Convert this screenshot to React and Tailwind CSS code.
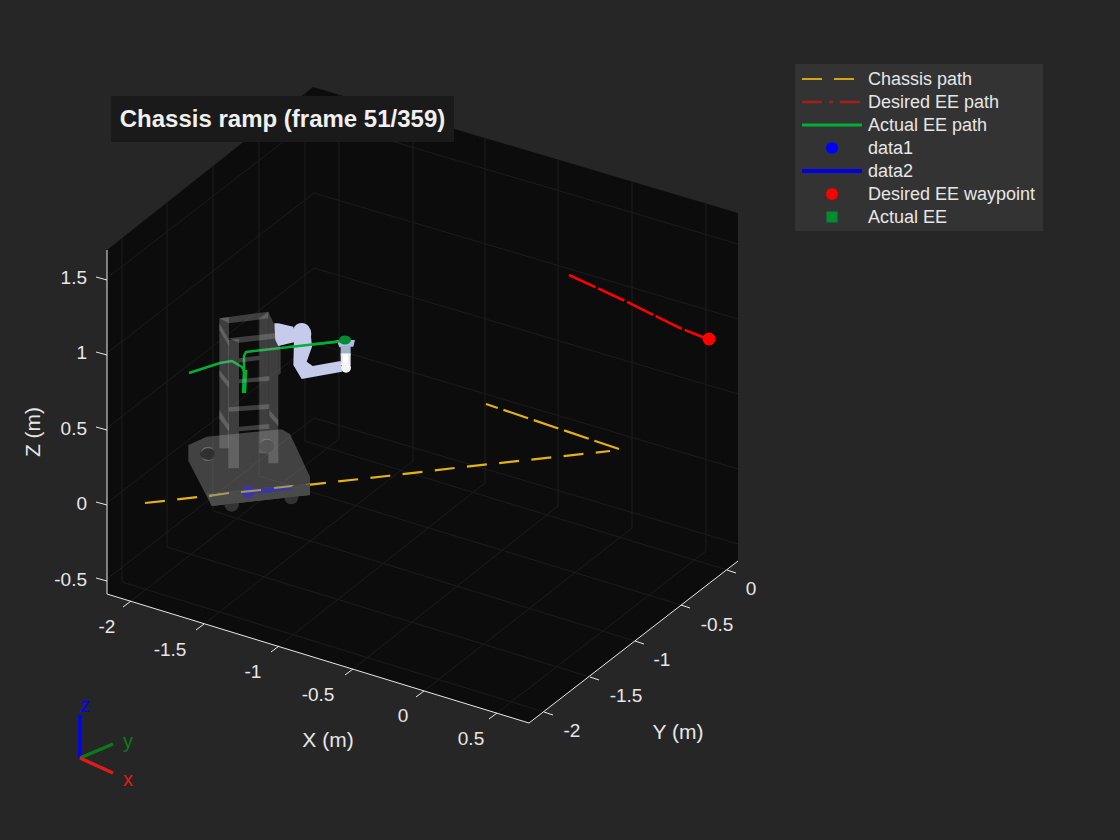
const FONT = { fontFamily: '"Liberation Sans", Arial, sans-serif' };

const zLeft = [278, 353, 428, 503, 579];
const zBack = [118, 193, 268, 343, 418];
const zRight = [244, 319, 394, 469, 544];

const leftWallX = [[122, 238, 582], [167, 202, 547], [213, 166, 511], [259, 130, 476], [305, 93, 441]];
const rightWallX = [[339, 95, 439], [413, 117, 461], [485, 138, 483], [558, 160, 506], [632, 182, 528], [706, 204, 551]];
const xTicks = [[131, 601], [204, 624], [279, 646], [353, 669], [424, 691], [497, 713]];
const yTicks = [[544, 712], [590, 677], [635, 641], [681, 605], [727, 570]];

function Grid() {
  return (
    <g stroke="#1c1c1c" strokeWidth="1" fill="none">
      {zLeft.map((y, i) => (
        <polyline key={y} points={`107,${y} 314,${zBack[i]} 738,${zRight[i]}`} />
      ))}
      {leftWallX.map(([x, a, b]) => (
        <line key={x} x1={x} y1={a} x2={x} y2={b} />
      ))}
      {rightWallX.map(([x, a, b]) => (
        <line key={x} x1={x} y1={a} x2={x} y2={b} />
      ))}
      {xTicks.map(([x, y], i) => (
        <line key={x} x1={x} y1={y} x2={rightWallX[i][0]} y2={rightWallX[i][2]} />
      ))}
      {yTicks.map(([x, y], i) => (
        <line key={x} x1={x} y1={y} x2={leftWallX[i][0]} y2={leftWallX[i][2]} />
      ))}
    </g>
  );
}

function Axes() {
  return (
    <g stroke="#e8e8e8" strokeWidth="1" fill="none">
      <polyline points="107,250 107,594 529,723 738,561" />
      {zLeft.map((y) => (
        <line key={y} x1="107" y1={y + 2} x2="96" y2={y - 1} />
      ))}
      {xTicks.map(([x, y]) => (
        <line key={x} x1={x} y1={y} x2={x - 8} y2={y + 6} />
      ))}
      {yTicks.map(([x, y]) => (
        <line key={x} x1={x} y1={y} x2={x + 9} y2={y + 3} />
      ))}
    </g>
  );
}

function Labels() {
  const items = [
    ['1.5', 87, 284, 'end'], ['1', 87, 359, 'end'], ['0.5', 87, 435, 'end'], ['0', 87, 510, 'end'], ['-0.5', 87, 586, 'end'],
    ['-2', 107, 633, 'middle'], ['-1.5', 170, 656, 'middle'], ['-1', 253, 678, 'middle'], ['-0.5', 318, 701, 'middle'], ['0', 403, 722, 'middle'], ['0.5', 471, 745, 'middle'],
    ['0', 751, 595, 'middle'], ['-0.5', 717, 631, 'middle'], ['-1', 662, 666, 'middle'], ['-1.5', 626, 702, 'middle'], ['-2', 572, 737, 'middle'],
  ];
  return (
    <g fill="#e6e6e6" fontSize="19" style={FONT}>
      {items.map(([t, x, y, a], i) => (
        <text key={i} x={x} y={y} textAnchor={a}>{t}</text>
      ))}
      <text x="328" y="747" fontSize="21" textAnchor="middle">X (m)</text>
      <text x="678" y="739" fontSize="21" textAnchor="middle">Y (m)</text>
      <text x="40" y="432" fontSize="21" textAnchor="middle" transform="rotate(-90 40 432)">Z (m)</text>
    </g>
  );
}

function RobotBase() {
  return (
    <g transform="translate(130,290) scale(0.33333)">
      <polygon points="175,465 230,440 455,418 480,432 540,560 540,615 245,648 175,512" fill="#9a9a9a" fillOpacity="0.38" />
      <polygon points="230,610 540,580 540,615 245,648" fill="#a0a0a0" fillOpacity="0.1" />
      <circle cx="305" cy="643" r="22" fill="#333333" />
      <circle cx="484" cy="622" r="21" fill="#333333" />
      <polygon points="245,615 540,582 540,615 245,648" fill="#4a4a4a" />
      <circle cx="232" cy="490" r="22" fill="#2a2a2a" fillOpacity="0.7" />
      <path d="M212 490 a21 21 0 0 1 40 -8 a24 24 0 0 0 -40 8z" fill="#6a6a6a" />
      <path d="M214 500 a22 22 0 0 0 38 4 a28 28 0 0 1 -38 -4z" fill="#6a6a6a" />
      <circle cx="410" cy="468" r="22" fill="#2a2a2a" fillOpacity="0.7" />
      <path d="M390 462 a21 21 0 0 1 38 -6 a24 24 0 0 0 -38 6z" fill="#6a6a6a" />
      <path d="M394 482 a22 22 0 0 0 32 2 a28 28 0 0 1 -32 -2z" fill="#6a6a6a" />
    </g>
  );
}

function BaseMarks() {
  return (
    <>
      <g transform="translate(130,290) scale(0.33333)">
        <circle cx="355" cy="605" r="19" fill="#3a36a8" />
        <polyline points="355,605 420,600 485,592" fill="none" stroke="#3a36a8" strokeWidth="13" />
      </g>
      <g fill="none" stroke="#a8975a" strokeWidth="2">
        <line x1="209" y1="496" x2="229" y2="493" />
        <line x1="241" y1="492" x2="261" y2="490" />
        <line x1="274" y1="488" x2="292" y2="486" />
      </g>
    </>
  );
}

function Mast() {
  return (
    <g transform="translate(130,290) scale(0.33333)" fill="#a8a8a8" fillOpacity="0.32">
      <polygon points="268,85 297,82 297,475 268,475" />
      <polygon points="295,150 327,146 327,535 295,535" />
      <polygon points="388,85 415,65 415,490 388,490" />
      <polygon points="415,65 445,130 445,520 415,520" />
      <polygon points="268,85 415,65 415,85 297,100" />
      <polygon points="295,145 445,128 445,145 327,158" />
      <polygon points="268,100 297,150 297,168 268,120" />
      <polygon points="327,205 388,197 388,210 327,218" />
      <polygon points="327,268 418,258 418,272 327,280" />
      <polygon points="297,352 418,342 418,357 297,365" />
      <polygon points="327,410 418,402 418,416 327,424" />
      <polygon points="268,240 297,275 297,295 268,258" />
      <polygon points="268,360 297,405 297,425 268,385" />
      <polygon points="418,360 445,390 445,408 418,378" />
      <polygon points="445,130 452,185 452,250 445,255" />
    </g>
  );
}

function RobotArm() {
  return (
    <g transform="translate(130,290) scale(0.33333)">
      <g fill="#c6cbec">
        <polygon points="433,100 445,100 490,110 498,155 445,168 436,150" />
        <ellipse cx="515" cy="132" rx="29" ry="33" />
        <polygon points="492,150 542,130 546,170 530,215 548,228 632,213 636,245 515,267 490,225" />
      </g>
      <polygon points="620,150 675,150 670,170 628,172" fill="#b4b8e8" />
      <rect x="632" y="168" width="30" height="28" fill="#9fb4c4" />
      <rect x="632" y="190" width="30" height="35" fill="#e4e7f2" />
      <circle cx="648" cy="233" r="15" fill="#f4f5f8" />
      <rect x="639" y="192" width="16" height="28" fill="#ffffff" />
    </g>
  );
}

function Paths() {
  return (
    <>
      <polyline
        points="145,503 387,476 463,467 610,451"
        fill="none" stroke="#e6b114" strokeWidth="2.2" strokeDasharray="20 12.4"
      />
      <polyline
        points="619,449 486,404"
        fill="none" stroke="#e6b114" strokeWidth="2.2" strokeDasharray="26 6"
      />
      <polyline
        points="569,275 623,300 680,328 700,336 708,339"
        fill="none" stroke="#ff0000" strokeWidth="2.5" strokeDasharray="29 3"
      />
      <circle cx="709" cy="339" r="6.5" fill="#ff0000" />
    </>
  );
}

function GreenPath() {
  return (
    <g fill="none" stroke="#00b035" strokeLinejoin="round">
      <polyline points="189,373 220,363 232,361 242,367 245,373" strokeWidth="2.5" />
      <polyline points="245,370 244,393" strokeWidth="4.5" />
      <polyline points="244,372 244,356 246,352 343,341" strokeWidth="2.5" />
    </g>
  );
}

function Triad() {
  return (
    <g style={FONT} fontSize="20">
      <line x1="80" y1="758" x2="80" y2="715" stroke="#0000ff" strokeWidth="3.5" />
      <line x1="80" y1="758" x2="113" y2="744" stroke="#0b7a1c" strokeWidth="3.5" />
      <line x1="80" y1="758" x2="113" y2="773" stroke="#e01b1b" strokeWidth="3.5" />
      <text x="85" y="712" fill="#0000ff" textAnchor="middle">z</text>
      <text x="128" y="748" fill="#0b7a1c" textAnchor="middle">y</text>
      <text x="128" y="786" fill="#e01b1b" textAnchor="middle">x</text>
    </g>
  );
}

const legend = [
  ['Chassis path', <line x1="0" x2="60" y1="8" y2="8" stroke="#d4a514" strokeWidth="2" strokeDasharray="20 12" />],
  ['Desired EE path', <line x1="0" x2="60" y1="8" y2="8" stroke="#a81c1c" strokeWidth="2.5" strokeDasharray="20 7 4 7" />],
  ['Actual EE path', <line x1="0" x2="60" y1="8" y2="8" stroke="#00b035" strokeWidth="3" />],
  ['data1', <circle cx="30" cy="8" r="6" fill="#0000ff" />],
  ['data2', <line x1="0" x2="60" y1="8" y2="8" stroke="#0000e0" strokeWidth="4" />],
  ['Desired EE waypoint', <circle cx="30" cy="8" r="6" fill="#ff0000" />],
  ['Actual EE', <rect x="24.5" y="2.5" width="11" height="11" fill="#008c30" />],
];

export default function App() {
  return (
    <div className="relative w-[1120px] h-[840px] overflow-hidden bg-[#262626]" style={FONT}>
      <svg className="absolute inset-0" width="1120" height="840" viewBox="0 0 1120 840">
        <polygon points="313,87 738,213 738,561 529,723 107,594 107,250" fill="#0c0c0c" />
        <Grid />
        <Paths />
        <RobotBase />
        <BaseMarks />
        <GreenPath />
        <Mast />
        <RobotArm />
        <polyline points="290,347 343,341" fill="none" stroke="#00b035" strokeWidth="2.5" />
        <ellipse cx="345" cy="340" rx="6" ry="4.5" fill="#008c30" />
        <Axes />
        <Labels />
        <Triad />
      </svg>
      <div className="absolute left-[111px] top-[96px] w-[343px] h-[46px] bg-[#1a1a1a] flex items-center justify-center text-[24px] font-bold text-[#f0f0f0] whitespace-nowrap">
        Chassis ramp (frame 51/359)
      </div>
      <div className="absolute left-[795px] top-[64px] w-[248px] h-[167px] bg-[#333333] pt-[3px] flex flex-col">
        {legend.map(([label, icon]) => (
          <div key={label} className="flex items-center h-[23px] pl-[7px] gap-[6px]">
            <svg width="60" height="16" viewBox="0 0 60 16" className="shrink-0">{icon}</svg>
            <span className="text-[18px] leading-none text-[#e6e6e6] whitespace-nowrap">{label}</span>
          </div>
        ))}
      </div>
    </div>
  );
}
